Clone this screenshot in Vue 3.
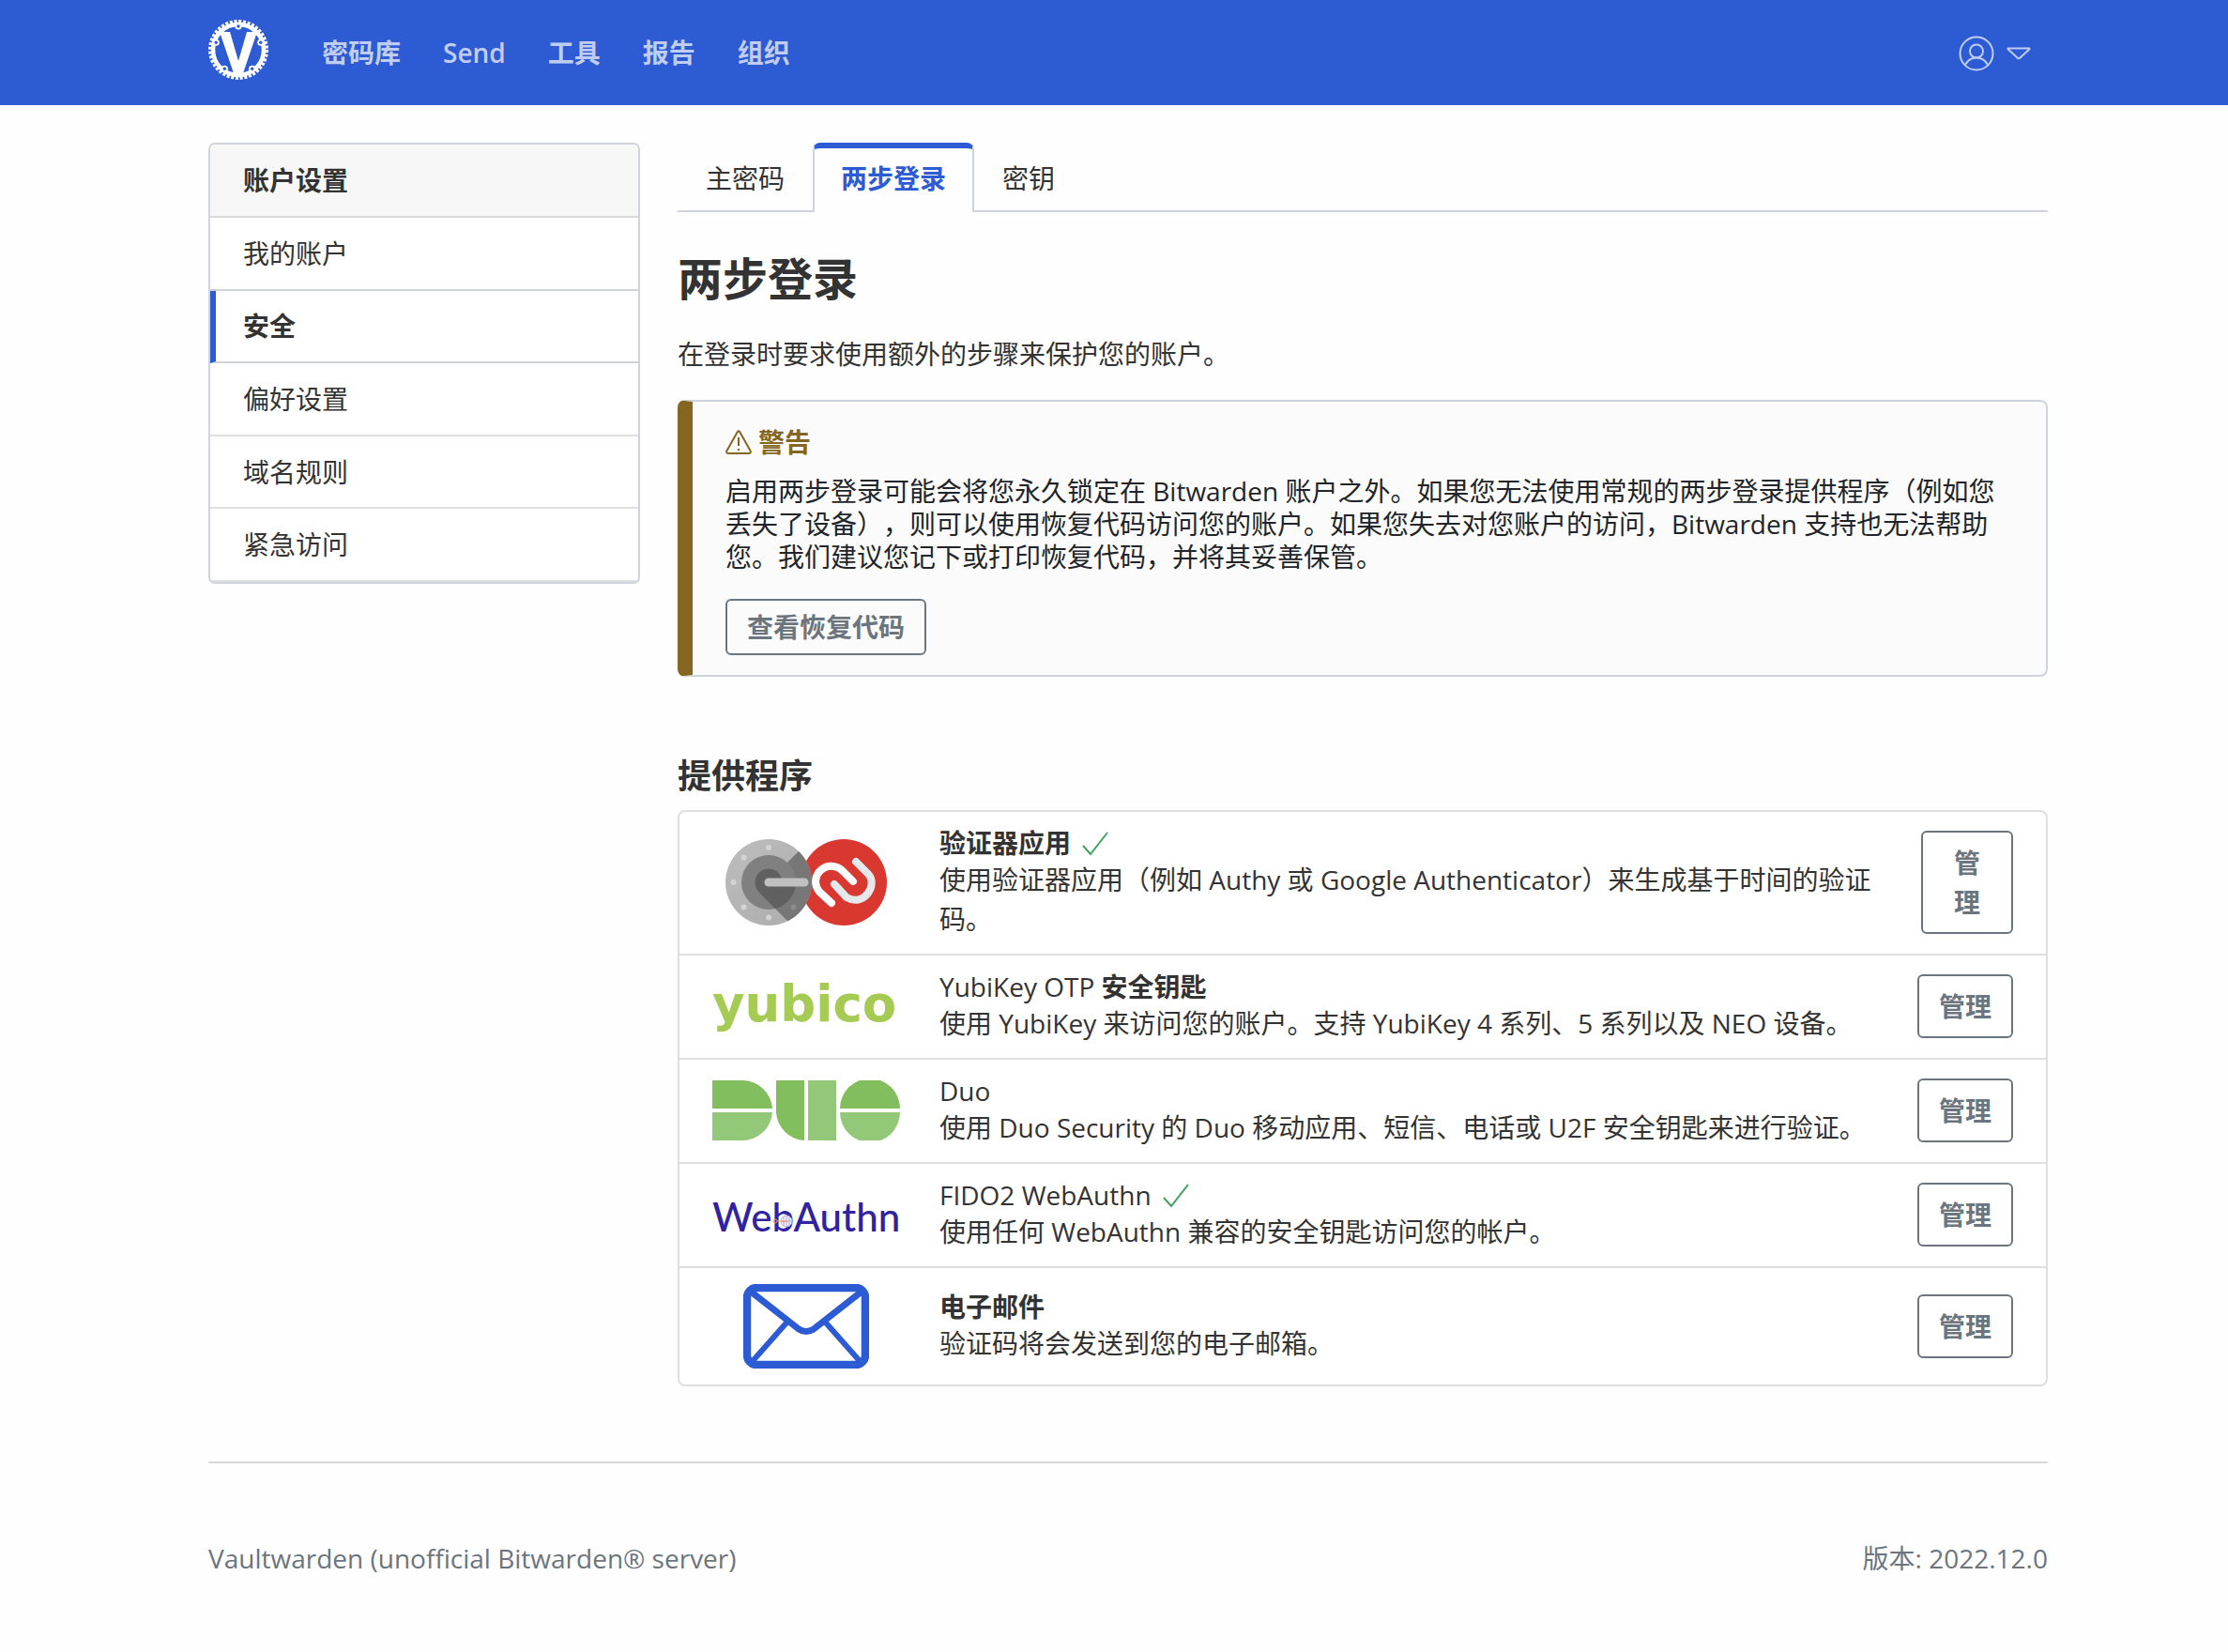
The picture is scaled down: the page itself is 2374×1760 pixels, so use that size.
<script setup>
const navLinks = ['密码库', 'Send', '工具', '报告', '组织']

const menu = [
  { label: '我的账户' },
  { label: '安全', active: true },
  { label: '偏好设置' },
  { label: '域名规则' },
  { label: '紧急访问' },
]

const tabs = [
  { label: '主密码' },
  { label: '两步登录', active: true },
  { label: '密钥' },
]

const providers = [
  {
    id: 'authenticator',
    name: '验证器应用',
    cjk: true,
    enabled: true,
    text: '使用验证器应用（例如 Authy 或 Google Authenticator）来生成基于时间的验证码。',
  },
  {
    id: 'yubico',
    name: 'YubiKey OTP ',
    strong: '安全钥匙',
    text: '使用 YubiKey 来访问您的账户。支持 YubiKey 4 系列、5 系列以及 NEO 设备。',
  },
  {
    id: 'duo',
    name: 'Duo',
    text: '使用 Duo Security 的 Duo 移动应用、短信、电话或 U2F 安全钥匙来进行验证。',
  },
  {
    id: 'webauthn',
    name: 'FIDO2 WebAuthn',
    enabled: true,
    text: '使用任何 WebAuthn 兼容的安全钥匙访问您的帐户。',
  },
  {
    id: 'email',
    name: '电子邮件',
    cjk: true,
    text: '验证码将会发送到您的电子邮箱。',
  },
]

const rimHoles = [-90, -18, 54, 126, 198].map((deg) => {
  const a = (deg * Math.PI) / 180
  return { x: 32 + 25 * Math.cos(a), y: 32 + 25 * Math.sin(a) }
})
</script>

<template>
  <div class="page">
    <header class="navbar">
      <a class="brand" href="#" aria-label="Vaultwarden">
        <svg width="64" height="64" viewBox="0 0 64 64">
          <circle cx="32" cy="32" r="30" fill="none" stroke="#fff" stroke-width="4" stroke-dasharray="3 1.712" />
          <circle cx="32" cy="32" r="27" fill="none" stroke="#fff" stroke-width="4.500" />
          <circle v-for="(h, i) in rimHoles" :key="i" :cx="h.x" :cy="h.y" r="3.600" fill="#fff" />
          <path d="M12 13 H23 L32 44 L41 13 H52 L36 60 H28 Z" fill="#fff" />
          <circle v-for="(h, i) in rimHoles" :key="'h' + i" :cx="h.x" :cy="h.y" r="1.700" fill="#2c5bd4" />
        </svg>
      </a>
      <nav class="links">
        <a v-for="l in navLinks" :key="l" href="#">{{ l }}</a>
      </nav>
      <button class="user" type="button" aria-label="账户">
        <svg width="38" height="38" viewBox="0 0 38 38" fill="none" stroke="currentColor" stroke-width="2">
          <circle cx="19" cy="19" r="17.500" />
          <circle cx="19" cy="16.500" r="7" />
          <path d="M7 31 C10 25.500 14 23.500 19 23.500 S28 25.500 31 31" />
        </svg>
        <svg width="26" height="14" viewBox="0 0 26 14" fill="none" stroke="currentColor" stroke-width="2" stroke-linejoin="round">
          <path d="M2 1.500 H24 Q25 1.500 24.300 2.500 L14 12 Q13 12.700 12 12 L1.700 2.500 Q1 1.500 2 1.500 Z" />
        </svg>
      </button>
    </header>

    <div class="container">
      <div class="columns">
        <aside class="card">
          <div class="card-head">账户设置</div>
          <nav class="menu">
            <a v-for="m in menu" :key="m.label" href="#" :class="{ active: m.active }">{{ m.label }}</a>
          </nav>
        </aside>

        <main>
          <nav class="tabs">
            <a v-for="t in tabs" :key="t.label" href="#" :class="{ active: t.active }">{{ t.label }}</a>
          </nav>
          <h1>两步登录</h1>
          <p class="lead">在登录时要求使用额外的步骤来保护您的账户。</p>

          <section class="callout">
            <h3>
              <svg width="28" height="26" viewBox="0 0 28 26" fill="none" stroke="currentColor" stroke-width="2" stroke-linejoin="round">
                <path d="M12.700 2.200 Q14 .3 15.300 2.200 L26.700 22.600 Q27.300 24.800 25.300 25 H2.700 Q.7 24.800 1.300 22.600 Z" />
                <path d="M14 8 V17" />
                <path d="M14 20 V22" />
              </svg>
              警告
            </h3>
            <p>启用两步登录可能会将您永久锁定在 Bitwarden 账户之外。如果您无法使用常规的两步登录提供程序（例如您丢失了设备），则可以使用恢复代码访问您的账户。如果您失去对您账户的访问，Bitwarden 支持也无法帮助您。我们建议您记下或打印恢复代码，并将其妥善保管。</p>
            <button class="btn" type="button">查看恢复代码</button>
          </section>

          <h2>提供程序</h2>
          <ul class="providers">
            <li v-for="p in providers" :key="p.id" :class="p.id">
              <div class="logo">
                <svg v-if="p.id === 'authenticator'" width="174" height="94" viewBox="0 0 174 94">
                  <defs>
                    <clipPath id="dial"><circle cx="47" cy="47" r="46" /></clipPath>
                    <clipPath id="knob"><circle cx="47" cy="47" r="29" /></clipPath>
                    <linearGradient id="steel" x1="0" y1="0" x2="1" y2="1">
                      <stop offset="0" stop-color="#bdbdbd" />
                      <stop offset="1" stop-color="#acacac" />
                    </linearGradient>
                  </defs>
                  <circle cx="127" cy="47" r="46" fill="#d93831" />
                  <circle cx="47" cy="47" r="46" fill="url(#steel)" />
                  <path d="M80 13 L47 46 L36 57 L68 89 L94 94 V0 Z" fill="#777" clip-path="url(#dial)" />
                  <circle cx="47" cy="47" r="29" fill="#808080" />
                  <path d="M36 57 L60 81 L78 70 V50 L47 47 Z" fill="#606060" clip-path="url(#knob)" />
                  <circle cx="47" cy="47" r="14.500" fill="#606060" />
                  <g fill="#d4d4d4">
                    <circle cx="47" cy="10" r="3" />
                    <circle cx="20.500" cy="20.500" r="3" />
                    <circle cx="9.500" cy="47" r="3" />
                    <circle cx="20.500" cy="73.500" r="3" />
                    <circle cx="47" cy="84.500" r="3" />
                    <circle cx="73.500" cy="73.500" r="3" fill="#8c8c8c" />
                  </g>
                  <path d="M47 47 H85" stroke="#c0c0c0" stroke-width="9" stroke-linecap="round" />
                  <g fill="none" stroke-width="8" stroke-linecap="round">
                    <path d="M140 25 L153 38 C164 49 149 74 130 63 L117 49" stroke="#e6e9eb" />
                    <path d="M137 46 L126 35 C110 20 88 40 101 57 L114 69" stroke="#fff" />
                  </g>
                </svg>
                <svg v-else-if="p.id === 'yubico'" width="200" height="72" viewBox="0 0 200 72">
                  <text class="yubico-mark" x="0" y="52">yubico</text>
                </svg>
                <svg v-else-if="p.id === 'duo'" width="200" height="64" viewBox="0 0 200 64">
                  <g fill="#82bd5e">
                    <path d="M0 0 H32 A32 32 0 0 1 64 30 H0 Z" />
                    <path d="M68 0 H98 V64 A32 32 0 0 1 68 34 Z" />
                    <path d="M136 30 A32 32 0 0 1 200 30 Z" />
                  </g>
                  <g fill="#93c879">
                    <path d="M0 34 H64 A32 32 0 0 1 32 64 H0 Z" />
                    <path d="M102 0 H132 V64 H102 Z" />
                    <path d="M136 34 H200 A32 32 0 0 1 136 34 Z" />
                  </g>
                </svg>
                <svg v-else-if="p.id === 'webauthn'" width="208" height="60" viewBox="0 0 208 60">
                  <text class="webauthn-mark" x="4" y="48">WebAuthn</text>
                  <g fill="none" stroke-width="1">
                    <circle cx="83" cy="37" r="6" fill="#f1eff8" stroke="#b3addb" />
                    <path d="M77 37 H89 M83 31 V43 M80 32 V42 M86 32 V42" stroke="#b3addb" />
                    <path d="M73 37 H84 M80 37 V39" stroke="#f0a050" />
                    <circle cx="71" cy="37" r="2" stroke="#f0a050" />
                  </g>
                </svg>
                <svg v-else width="134" height="90" viewBox="0 0 134 90" fill="none" stroke="#2c5bd4">
                  <rect x="4" y="4" width="126" height="82" rx="10" stroke-width="8.500" />
                  <path d="M8 8 L59 48 Q67 53 75 48 L126 8" stroke-width="7" />
                  <path d="M10 82 L48 39 M124 82 L86 39" stroke-width="6" />
                </svg>
              </div>
              <div class="info">
                <h3 :class="{ bold: p.cjk }">
                  {{ p.name }}<b v-if="p.strong">{{ p.strong }}</b>
                  <svg v-if="p.enabled" class="check" width="28" height="26" viewBox="0 0 28 26" fill="none" stroke="#3fa15f" stroke-width="2">
                    <path d="M1 15 L9 24 L27 1" />
                  </svg>
                </h3>
                <p>{{ p.text }}</p>
              </div>
              <button class="btn manage" type="button">管理</button>
            </li>
          </ul>
        </main>
      </div>

      <footer>
        <span>Vaultwarden (unofficial Bitwarden® server)</span>
        <span>版本: 2022.12.0</span>
      </footer>
    </div>
  </div>
</template>

<style>
body {
  margin: 0;
  background: #fefefe;
}
</style>

<style scoped>
.page {
  font-family: 'Open Sans', 'Noto Sans CJK SC', sans-serif;
  font-size: 28px;
  line-height: 42px;
  color: #333;
  text-spacing-trim: space-all;
}
.page * {
  box-sizing: border-box;
}
a {
  color: inherit;
  text-decoration: none;
}
h1, h2, h3, p, ul {
  margin: 0;
  padding: 0;
}
.navbar {
  display: flex;
  align-items: center;
  min-height: 112px;
  padding: 0 210px 0 222px;
  background: #2c5bd4;
  color: #c0cdf2;
}
.brand {
  display: flex;
  padding-bottom: 6px;
}
.links {
  display: flex;
  gap: 45px;
  margin-left: 57px;
  font-weight: 600;
}
.user {
  display: flex;
  align-items: center;
  gap: 13px;
  margin-left: auto;
  padding: 2px 0 0;
  border: 0;
  background: none;
  color: inherit;
}
.container {
  padding: 40px 192px 60px 222px;
}
.columns {
  display: grid;
  grid-template-columns: minmax(0, 460fr) minmax(0, 1460fr);
  gap: 40px;
  align-items: start;
}
.card {
  border: 2px solid #ced4da;
  border-radius: 7px;
  background: #fff;
  overflow: hidden;
}
.card-head {
  padding: 17px 35px;
  background: #f7f7f7;
  border-bottom: 2px solid #d8dadc;
  font-weight: 600;
}
.menu {
  display: grid;
  grid-auto-rows: 1fr;
  min-height: 388px;
}
.menu a {
  display: flex;
  align-items: center;
  padding: 0 35px;
  border-bottom: 2px solid #dfdfdf;
}
.menu a:first-child {
  border-bottom-color: #ced4da;
}
.menu a.active {
  padding-left: 29px;
  border-left: 6px solid #2c5bd4;
  border-bottom-color: #ced4da;
  font-weight: 600;
}
.tabs {
  display: flex;
  border-bottom: 2px solid #ced4da;
}
.tabs a {
  margin-bottom: -2px;
  padding: 11px 28px 15px;
  border: 2px solid transparent;
  border-top-width: 6px;
  border-bottom: 0;
}
.tabs a.active {
  border-color: #2c5bd4 #ced4da;
  border-radius: 8px 8px 0 0;
  background: #fefefe;
  color: #2c5bd4;
  font-weight: 600;
}
h1 {
  margin-top: 42px;
  font-size: 48px;
  line-height: 58px;
  font-weight: 600;
}
.lead {
  margin-top: 30px;
}
.callout {
  margin-top: 28px;
  padding: 22px 48px 21px 35px;
  border: 2px solid #ced4da;
  border-left: 16px solid #856621;
  border-radius: 8px;
  background: #fbfbfb;
  color: #212529;
}
.callout h3 {
  display: flex;
  align-items: center;
  gap: 7px;
  color: #856621;
  font-size: 28px;
  font-weight: 600;
}
.callout p {
  margin: 14px 0 27px;
  line-height: 35px;
}
.btn {
  display: block;
  padding: 7px 21px;
  border: 2px solid #6c757d;
  border-radius: 6px;
  background: transparent;
  color: #6c757d;
  font: inherit;
  font-weight: 600;
}
h2 {
  margin-top: 84px;
  font-size: 36px;
  line-height: 44px;
  font-weight: 600;
}
.providers {
  margin-top: 14px;
  border: 2px solid #dfdfdf;
  border-radius: 8px;
  background: #fff;
  list-style: none;
}
.providers li {
  display: flex;
  align-items: center;
  padding: 15px 35px 16px;
}
.providers li + li {
  border-top: 2px solid #dfdfdf;
}
.providers li.email {
  min-height: 126px;
}
.logo {
  display: flex;
  flex: none;
  justify-content: center;
  width: 200px;
  margin-right: 42px;
}
.logo svg {
  flex: none;
  margin: -4px 0;
}
.info {
  min-width: 0;
}
.info h3 {
  font-size: 28px;
  line-height: 36px;
  font-weight: 400;
}
.info h3.bold,
.info b {
  font-weight: 600;
}
.check {
  margin-left: 12px;
  vertical-align: -3px;
}
.manage {
  flex: none;
  margin-left: auto;
  padding: 11px 21px;
}
.authenticator .info {
  flex: 1;
  padding-right: 48px;
}
.authenticator .manage {
  width: 98px;
  padding: 11px 32px;
}
.yubico-mark {
  font: 700 53px 'DejaVu Sans', sans-serif;
  fill: #a5cb55;
}
.webauthn-mark {
  font: 500 42px Lato, sans-serif;
  fill: #30239f;
}
footer {
  display: flex;
  justify-content: space-between;
  margin-top: 80px;
  padding-top: 80px;
  border-top: 2px solid #d8d8d8;
  color: #6c757d;
}
</style>
